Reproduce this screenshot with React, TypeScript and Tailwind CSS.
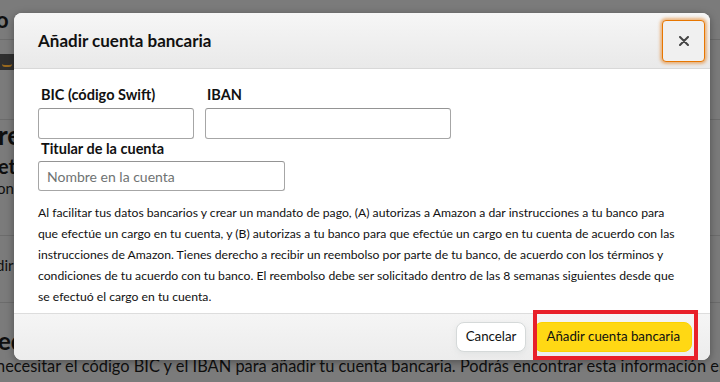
import React from "react";

const font = { fontFamily: 'Lato, "Liberation Sans", Arial, sans-serif' };

export default function App() {
  return (
    <div className="relative w-[720px] h-[382px] overflow-hidden bg-[#7b7b7b] text-[#0f0f0f]" style={font}>
      {/* background page (dimmed) */}
      <div className="flex flex-col w-full h-full">
        <div className="shrink-0 h-[40px] border-b border-[#6c6c6c] flex items-end pb-[8px]">
          <span className="text-[22px] font-bold leading-none -ml-[4px]">o</span>
        </div>
        <div className="shrink-0 h-[14px]" />
        <div className="shrink-0 h-[16px] w-[20px] bg-[#2f2f2f] flex items-end pb-[3px]">
          <div className="ml-[2px] w-[10px] h-[3px] border-b-[2px] border-[#9a6a1e] rounded-b-full" />
        </div>
        <div className="shrink-0 h-[50px] border-b border-[#6c6c6c]" />
        <div className="shrink-0 text-[26px] font-bold leading-[30px] -ml-[2px] h-[34px]">re</div>
        <div className="shrink-0 text-[20px] font-bold leading-[24px] -ml-[2px] h-[24px]">eta</div>
        <div className="shrink-0 text-[15px] leading-[20px] -ml-[3px] h-[58px] border-b border-[#6c6c6c]">on</div>
        <div className="shrink-0 text-[15px] leading-[20px] -ml-[4px] h-[66px] pt-[19px]">dir</div>
        <div className="shrink-0 border-t border-[#6c6c6c] text-[24px] font-bold leading-[26px] -ml-[2px] pt-[25px]">ed</div>
        <div className="shrink-0 text-[16.4px] leading-[24px] whitespace-nowrap -ml-[4px]">necesitar el código BIC y el IBAN para añadir tu cuenta bancaria. Podrás encontrar esta información en tu extracto</div>
        <div className="shrink-0 text-[16.4px] leading-[22px] whitespace-nowrap -ml-[4px]">bancario o contactando con tu banco. Más información</div>
      </div>

      {/* modal */}
      <div className="absolute left-[14px] top-[13px] w-[696px] h-[347px] rounded-[8px] bg-white overflow-hidden shadow-[0_2px_8px_rgba(0,0,0,0.35)] flex flex-col">
        <div className="h-[56px] shrink-0 flex items-center justify-between pl-[24px] pr-[5px] bg-gradient-to-b from-[#f6f6f6] to-[#e9e9e9] border-b border-[#d8d8d8]">
          <span className="text-[17px] font-bold text-[#111]">Añadir cuenta bancaria</span>
          <button className="w-[43px] h-[42px] rounded-[4px] border border-[#e77600] bg-[#f0f0f0] shadow-[0_0_3px_2px_rgba(228,121,17,0.5)] flex items-center justify-center text-[#444]">
            <svg width="10" height="10" viewBox="0 0 10 10">
              <path d="M1 1 L9 9 M9 1 L1 9" stroke="#444" strokeWidth="2" strokeLinecap="round" />
            </svg>
          </button>
        </div>

        <div className="flex-1 px-[24px] pt-[16px]">
          <div className="flex gap-[11px]">
            <div className="flex flex-col">
              <label className="pl-[3px] text-[14.5px] font-bold leading-[20px] text-[#111]">BIC (código Swift)</label>
              <div className="mt-[3px] w-[156px] h-[31px] rounded-[3px] border border-[#a6a6a6] border-t-[#949494]" />
            </div>
            <div className="flex flex-col">
              <label className="pl-[2px] text-[14.5px] font-bold leading-[20px] text-[#111]">IBAN</label>
              <div className="mt-[3px] w-[246px] h-[31px] rounded-[3px] border border-[#a6a6a6] border-t-[#949494]" />
            </div>
          </div>
          <label className="block pl-[3px] mt-[0px] text-[14.5px] font-bold leading-[20px] text-[#111]">Titular de la cuenta</label>
          <div className="mt-[2px] w-[247px] h-[30px] rounded-[3px] border border-[#a6a6a6] border-t-[#949494] flex items-center pl-[8px] text-[14px] text-[#6f7373]">
            Nombre en la cuenta
          </div>
          <p className="mt-[11px] text-[12.2px] leading-[21px] text-[#111] whitespace-nowrap">
            Al facilitar tus datos bancarios y crear un mandato de pago, (A) autorizas a Amazon a dar instrucciones a tu banco para
            <br />
            que efectúe un cargo en tu cuenta, y (B) autorizas a tu banco para que efectúe un cargo en tu cuenta de acuerdo con las
            <br />
            instrucciones de Amazon. Tienes derecho a recibir un reembolso por parte de tu banco, de acuerdo con los términos y
            <br />
            condiciones de tu acuerdo con tu banco. El reembolso debe ser solicitado dentro de las 8 semanas siguientes desde que
            <br />
            se efectuó el cargo en tu cuenta.
          </p>
        </div>

        <div className="h-[47px] shrink-0 bg-gradient-to-b from-[#f5f5f5] to-[#ececec] border-t border-[#dddddd] flex justify-end items-start pt-[8px] pr-[18px] gap-[8px]">
          <button className="h-[30px] px-[9px] rounded-[8px] bg-white border border-[#d5d9d9] shadow-[0_2px_5px_rgba(213,217,217,0.5)] text-[13.3px] text-[#0f1111] whitespace-nowrap">Cancelar</button>
          <button className="h-[30px] px-[11px] rounded-[8px] bg-[#ffd814] border border-[#fcd200] text-[13.3px] text-[#0f1111] whitespace-nowrap">Añadir cuenta bancaria</button>
        </div>
      </div>

      {/* annotation */}
      <div className="absolute left-[533px] top-[310px] w-[165px] h-[50px] border-[4px] border-[#e8202a]" />
    </div>
  );
}
